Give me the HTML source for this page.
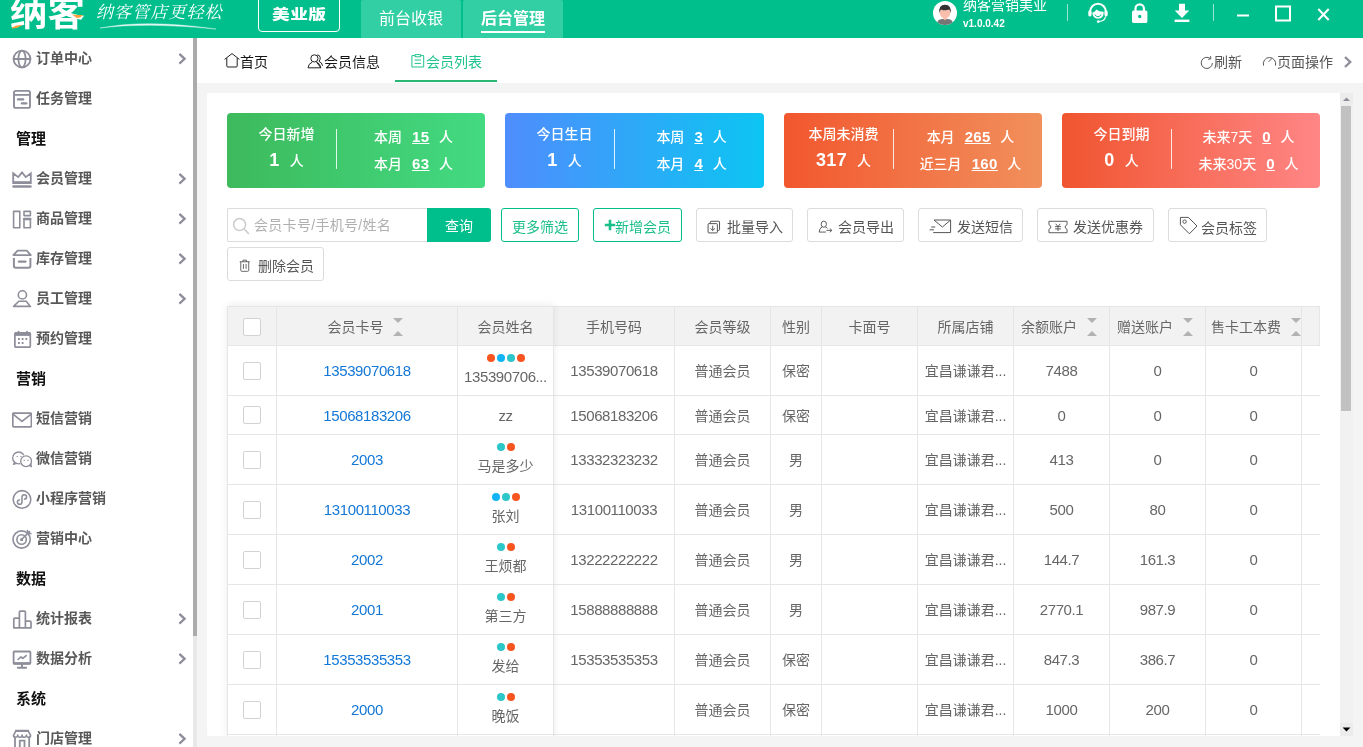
<!DOCTYPE html>
<html lang="zh-CN">
<head>
<meta charset="utf-8">
<title>会员列表</title>
<style>
*{box-sizing:border-box;margin:0;padding:0}
html,body{width:1363px;height:747px;overflow:hidden;background:#f4f4f4;font-family:"Liberation Sans","Noto Sans CJK SC",sans-serif;font-size:14px;color:#333}
.abs{position:absolute}
#hdr,#side,#tabs,#panel{will-change:transform}
#hdr{position:absolute;left:0;top:0;width:1363px;height:38px;background:#00bf8c;overflow:hidden}
#side{position:absolute;left:0;top:38px;width:193px;height:709px;background:#fff;overflow:hidden}
#sthumb{position:absolute;left:193px;top:38px;width:4px;height:598px;background:#ababab}
#strack{position:absolute;left:193px;top:38px;width:4px;height:709px;background:#e8e8e8}
#tabs{position:absolute;left:197px;top:38px;width:1166px;height:45px;background:#fff}
#panel{position:absolute;left:207px;top:93px;width:1133px;height:643px;background:#fff;overflow:hidden;border-radius:2px 0 0 2px}
#vtrack{position:absolute;left:1340px;top:93px;width:13px;height:643px;background:#f1f1f1}
#vthumb{position:absolute;left:1341px;top:106px;width:10px;height:305px;background:#c1c1c1}
/* sidebar */
.mi{position:absolute;left:0;width:193px;height:40px;line-height:40px;font-weight:700;color:#585858;font-size:14px}
.mi span{position:absolute;left:36px;top:0;white-space:nowrap}
.mi svg.ic{position:absolute;left:12px;top:11px;width:20px;height:20px}
.mi svg.ch{position:absolute;left:177px;top:15px;width:10px;height:12px}
.mh{position:absolute;left:16px;height:40px;line-height:42px;font-weight:bold;color:#111;font-size:15px;white-space:nowrap}

/* header */
#logo{position:absolute;left:10px;top:-8px;font-size:35px;line-height:44px;font-weight:700;color:#fff;letter-spacing:0;transform:scaleX(1.07);transform-origin:0 0;white-space:nowrap;font-family:"Liberation Sans","Noto Sans CJK SC",sans-serif}
#slogan{position:absolute;left:96px;top:2px;font-size:17px;line-height:22px;color:#fff;letter-spacing:1.1px;white-space:nowrap;font-style:italic;font-weight:400;font-family:"Liberation Serif","Noto Serif CJK SC",serif}
#ver{position:absolute;left:258px;top:-6px;width:82px;height:38px;border:1px solid #fff;border-radius:4px;color:#fff;font-weight:900;font-size:17px;line-height:40px;text-align:center;letter-spacing:0.5px}
.ht{position:absolute;top:0;height:38px;background:#32cfa5;border-radius:2px 2px 0 0;color:#fff;font-size:16px;line-height:38px;text-align:center}
#uname{position:absolute;left:963px;top:-5px;color:#fff;font-size:14px;line-height:20px;white-space:nowrap}
#uver{position:absolute;left:963px;top:17px;color:#fff;font-weight:bold;font-size:10px;line-height:14px;white-space:nowrap}
.hdiv{position:absolute;top:4px;width:1px;height:17px;background:rgba(255,255,255,.6)}

/* tabs */
.tb{position:absolute;top:1px;height:45px;line-height:46px;font-size:14px;color:#151515;white-space:nowrap}
.tb svg{position:absolute}

/* cards */
.card{position:absolute;top:20px;height:75px;border-radius:4px;color:#fff;font-size:14px;font-weight:500}
.card .dv{position:absolute;left:109px;top:16px;width:1px;height:40px;background:rgba(255,255,255,.85)}
.card .l1,.card .l2,.card .r1,.card .r2{position:absolute;white-space:nowrap;text-align:center}
.card .l1{left:0;width:119px;top:10px;line-height:22px}
.card .l2{left:0;width:119px;top:34px;line-height:26px}
.card .l2 b{font-size:18px;letter-spacing:.4px;margin-right:10px;position:relative;top:0}
.card .r1{left:115px;width:143px;top:13px;line-height:22px}
.card .r2{left:115px;width:143px;top:40px;line-height:22px}
.card u{font-weight:bold;font-size:15px;letter-spacing:.4px;margin:0 9.5px 0 10px}
/* toolbar */
.btn{position:absolute;height:34px;line-height:36px;border:1px solid #dcdcdc;border-radius:3px;background:#fff;color:#555;font-size:14px;white-space:nowrap}
.btn span{position:absolute;top:0;white-space:nowrap}
.btn svg{position:absolute}
.btn.g{border-color:#00bf8c;color:#1bbf8a}

/* table */
#tbl{position:absolute;left:20px;top:213px;width:1093px;height:430px;color:#666;font-size:14px}
#tbl .hb{position:absolute;left:0;top:0;width:1093px;height:40px;background:#f2f2f2;border:1px solid #e6e6e6}
#tbl .vl{position:absolute;top:0;width:1px;height:430px;background:#e6e6e6}
#tbl .hl{position:absolute;left:0;width:1093px;height:1px;background:#e6e6e6}
#tbl .c{position:absolute;height:20px;line-height:20px;text-align:center;white-space:nowrap}
#tbl .c.n{font-size:15px;letter-spacing:-.4px}
#tbl .th{position:absolute;top:11px;height:20px;line-height:20px;white-space:nowrap;text-align:center}
#tbl .cb{position:absolute;left:16px;width:18px;height:18px;border:1px solid #d2d2d2;border-radius:2px;background:#fff}
#tbl a{color:#1377d6;text-decoration:none}
#tbl .st{position:absolute;width:10px;height:20px;top:11px}
#tbl .st:before,#tbl .st:after{content:"";position:absolute;left:0;border:5px solid transparent}
#tbl .st:before{top:1px;border-top-color:#b2b2b2;border-bottom-width:0}
#tbl .st:after{top:14px;border-bottom-color:#b2b2b2;border-top-width:0}
#tbl .d{position:absolute;width:8px;height:8px;border-radius:50%}
</style>
</head>
<body>
<div id="hdr">
<div id="logo">纳客</div>
<svg class="abs" style="left:0;top:0" width="100" height="38" viewBox="0 0 100 38"><path d="M12 27.5 Q16 24.5 22 25 Q18 28.5 12 28.5Z" fill="#f7a13a"/><path d="M72 14.5 Q77 15 83 15 Q80 19 76 17.5Z" fill="#f7a13a"/></svg>
<div id="slogan">纳客管店更轻松</div>
<svg class="abs" style="left:96px;top:20px" width="130" height="12" viewBox="0 0 130 12"><path d="M4 8 Q50 -1 120 9 Q50 2 4 8Z" fill="#fff" fill-opacity=".85" stroke="#fff" stroke-opacity=".6" stroke-width=".6"/></svg>
<div id="ver"><span style="display:inline-block;transform:scale(1.04,.8);transform-origin:50% 50%">美业版</span></div>
<div class="ht" style="left:361px;width:100px">前台收银</div>
<div class="ht" style="left:463px;width:100px;font-weight:bold">后台管理<i class="abs" style="left:18px;top:31px;width:64px;height:2px;background:#fff"></i></div>
<svg class="abs" style="left:933px;top:1px" width="24" height="24" viewBox="0 0 24 24"><defs><clipPath id="avc"><circle cx="12" cy="12" r="12"/></clipPath></defs><circle cx="12" cy="12" r="12" fill="#fff"/><g clip-path="url(#avc)"><path d="M3.4 26 Q3.4 18.2 9 18 H15 Q20.6 18.2 20.6 26Z" fill="#757575"/><path d="M10.4 15 H13.6 V18 L12 19.6 L10.4 18Z" fill="#f5b5a0"/><ellipse cx="12" cy="11.6" rx="5.3" ry="6" fill="#f9bfac"/><path d="M6.4 12.2 Q5.2 4 12 3.8 Q18.8 4 17.6 12.2 Q17.2 9.4 16.2 8.6 Q12 10 8 8.4 Q6.8 9.4 6.4 12.2Z" fill="#333"/></g></svg>
<div id="uname">纳客营销美业</div>
<div id="uver">v1.0.0.42</div>
<div class="hdiv" style="left:1067px"></div>
<svg class="abs" style="left:1086px;top:1px" width="24" height="24" viewBox="0 0 24 24" fill="none" stroke="#fff"><path d="M4.2 13 V10.5 A7.8 7.8 0 0 1 19.8 10.5 V13" stroke-width="2"/><rect x="2.3" y="9.5" width="3.2" height="6" rx="1.4" fill="#fff" stroke="none"/><rect x="18.5" y="9.5" width="3.2" height="6" rx="1.4" fill="#fff" stroke="none"/><path d="M6.3 11.5 Q9 11 10.5 8.5 Q13 11 17.7 10.8 Q18 17.5 12 17.8 Q6.5 17.5 6.3 11.5Z" fill="#fff" stroke="none"/><path d="M8.7 13.6 Q10.5 15.8 12 15.8 Q13.5 15.8 15.3 13.6" stroke="#00bf8c" stroke-width="1"/><path d="M19.5 15.5 Q19 20 13 20.5" stroke-width="1.2"/><circle cx="12.3" cy="20.6" r="1.4" fill="#fff" stroke="none"/></svg>
<svg class="abs" style="left:1130px;top:2px" width="20" height="22" viewBox="0 0 20 22"><path d="M5.5 9 V6.5 A4.2 4.2 0 0 1 13.9 6.5 V9" fill="none" stroke="#fff" stroke-width="2.2"/><rect x="2" y="8.5" width="15.4" height="12.4" rx="1.6" fill="#fff"/><circle cx="9.7" cy="14.5" r="1.7" fill="#00bf8c"/></svg>
<svg class="abs" style="left:1172px;top:2px" width="20" height="22" viewBox="0 0 20 22" fill="#fff"><path d="M7 1.8 H13 V8.5 H17.3 L10 16 L2.7 8.5 H7Z"/><rect x="2.6" y="17.6" width="14.8" height="2.4"/></svg>
<div class="hdiv" style="left:1213px"></div>
<svg class="abs" style="left:1230px;top:0" width="110" height="30" viewBox="0 0 110 30" stroke="#fff" stroke-width="2" fill="none"><path d="M7 15.5 H19"/><rect x="46" y="6.5" width="14" height="14"/><path d="M88.3 9 L98.7 20 M98.7 9 L88.3 20"/></svg>
</div>
<div id="side">
<div class="mi" style="top:0px"><svg class="ic" viewBox="0 0 20 20" fill="none" stroke="#8e8e9b" stroke-width="1.8" stroke-linecap="round" stroke-linejoin="round"><circle cx="10" cy="10" r="8.4"/><ellipse cx="10" cy="10" rx="3.6" ry="8.4"/><path d="M1.6 10 H18.4"/></svg><span>订单中心</span><svg class="ch" viewBox="0 0 10 12" fill="none" stroke="#8e8e9b" stroke-width="2.3" stroke-linecap="butt" stroke-linejoin="miter"><path d="M2.4 0.9 L7.6 5.8 L2.4 10.7"/></svg></div>
<div class="mi" style="top:40px"><svg class="ic" viewBox="0 0 20 20" fill="none" stroke="#8e8e9b" stroke-width="1.8" stroke-linecap="round" stroke-linejoin="round"><rect x="2" y="1.9" width="16" height="17" rx="1.6" stroke-width="1.9"/><path d="M2 5.9 H18" stroke-width="1.8" stroke-linecap="butt"/><path d="M6 10.4 H11.2 M9.8 14.4 H14.4" stroke-width="2.2" stroke-linecap="round"/></svg><span>任务管理</span></div>
<div class="mh" style="top:80px">管理</div>
<div class="mi" style="top:120px"><svg class="ic" viewBox="0 0 20 20" fill="none" stroke="#8e8e9b" stroke-width="1.8" stroke-linecap="round" stroke-linejoin="round"><g transform="translate(0,0.5)"><path d="M1.2 3.8 L6.2 7.6 L10 2.9 L13.8 7.6 L18.8 3.8 V13.6 H1.2Z" stroke-linejoin="miter"/><path d="M1.2 13 H18.8" stroke-width="2.65" stroke-linecap="butt"/><path d="M1.6 17 H18.4" stroke-width="2.65"/></g></svg><span>会员管理</span><svg class="ch" viewBox="0 0 10 12" fill="none" stroke="#8e8e9b" stroke-width="2.3" stroke-linecap="butt" stroke-linejoin="miter"><path d="M2.4 0.9 L7.6 5.8 L2.4 10.7"/></svg></div>
<div class="mi" style="top:160px"><svg class="ic" viewBox="0 0 20 20" fill="none" stroke="#8e8e9b" stroke-width="1.6" stroke-linecap="round" stroke-linejoin="round"><g transform="translate(0,0.6)"><rect x="1.6" y="1.8" width="6.2" height="16.4"/><rect x="12" y="1.8" width="6.4" height="4.2"/><rect x="12" y="9" width="6.4" height="9.2"/><path d="M12 9.4 H18.4" stroke-width="2.25"/></g></svg><span>商品管理</span><svg class="ch" viewBox="0 0 10 12" fill="none" stroke="#8e8e9b" stroke-width="2.3" stroke-linecap="butt" stroke-linejoin="miter"><path d="M2.4 0.9 L7.6 5.8 L2.4 10.7"/></svg></div>
<div class="mi" style="top:200px"><svg class="ic" viewBox="0 0 20 20" fill="none" stroke="#8e8e9b" stroke-width="1.8" stroke-linecap="round" stroke-linejoin="round"><path d="M5.6 1.7 H14.8 L18.8 6.1 H1.4 Z" stroke-width="1.8" stroke-linejoin="round"/><path d="M1.9 9 V17 Q1.9 18.8 3.7 18.8 H16.6 Q18.4 18.8 18.4 17 V9" stroke-width="2" stroke-linecap="butt"/><path d="M7 12.6 H13.4" stroke-width="2.4"/></svg><span>库存管理</span><svg class="ch" viewBox="0 0 10 12" fill="none" stroke="#8e8e9b" stroke-width="2.3" stroke-linecap="butt" stroke-linejoin="miter"><path d="M2.4 0.9 L7.6 5.8 L2.4 10.7"/></svg></div>
<div class="mi" style="top:240px"><svg class="ic" viewBox="0 0 20 20" fill="none" stroke="#8e8e9b" stroke-width="1.7" stroke-linecap="round" stroke-linejoin="round"><circle cx="10.4" cy="5.9" r="4.1" stroke-width="1.6"/><path d="M6.8 12.3 H14.2 L18.4 17.4 H1.6 Z" stroke-width="1.6" stroke-linejoin="round"/></svg><span>员工管理</span><svg class="ch" viewBox="0 0 10 12" fill="none" stroke="#8e8e9b" stroke-width="2.3" stroke-linecap="butt" stroke-linejoin="miter"><path d="M2.4 0.9 L7.6 5.8 L2.4 10.7"/></svg></div>
<div class="mi" style="top:280px"><svg class="ic" viewBox="0 0 20 20" fill="none" stroke="#8e8e9b" stroke-width="1.8" stroke-linecap="round" stroke-linejoin="round"><rect x="2.9" y="3.8" width="15.4" height="14.4" rx="1" stroke-width="1.7"/><path d="M2.9 5 H18.3" stroke-width="3.8" stroke-linecap="butt"/><path d="M6.6 2.6 V3 M15 2.6 V3" stroke-width="1.8"/><path d="M6 10 H7.8 M9.7 10 H11.5 M13.4 10 H15.2 M6 14 H7.8 M9.7 14 H11.5" stroke-width="1.8" stroke-linecap="butt"/></svg><span>预约管理</span></div>
<div class="mh" style="top:320px">营销</div>
<div class="mi" style="top:360px"><svg class="ic" viewBox="0 0 20 20" fill="none" stroke="#8e8e9b" stroke-width="1.7" stroke-linecap="round" stroke-linejoin="round"><g transform="translate(0,0.8)"><rect x="0.8" y="3.4" width="18.6" height="13.6" rx="1"/><path d="M1 4.4 L10 11.6 L19.2 4.4"/></g></svg><span>短信营销</span></div>
<div class="mi" style="top:400px"><svg class="ic" viewBox="0 0 20 20" fill="none" stroke="#8e8e9b" stroke-width="1.8" stroke-linecap="round" stroke-linejoin="round"><circle cx="6.6" cy="8.9" r="5.9" stroke-width="1.35"/><path d="M2.6 13.2 L1.5 15.4 L4.4 14.4" stroke-width="1.35" fill="#fff"/><circle cx="14.1" cy="12.2" r="5.4" fill="#fff" stroke="#fff" stroke-width="2"/><circle cx="14.1" cy="12.2" r="5.4" fill="#fff" stroke-width="1.35"/><path d="M17.6 16.4 L19.4 17.6 L18.8 15" stroke-width="1.35" fill="#fff"/><path d="M4.6 7.5 H5.8 M8.4 7.5 H9.6 M11.6 11.4 H12.8 M15.4 11.4 H16.6" stroke-width="1.2" stroke-linecap="butt"/></svg><span>微信营销</span></div>
<div class="mi" style="top:440px"><svg class="ic" viewBox="0 0 20 20" fill="none" stroke="#8e8e9b" stroke-width="1.8" stroke-linecap="round" stroke-linejoin="round"><g transform="translate(0,0.8)"><circle cx="10" cy="9.6" r="8.8" stroke-width="1.55"/><path d="M10 12.4 V7.2 A2.3 2.3 0 0 1 14.6 7.2 A2.1 2.1 0 0 1 12.6 9.3 M10 7.2 V12.2 A2.3 2.3 0 0 1 5.4 12.2 A2.1 2.1 0 0 1 7.4 10.1" stroke-width="1.55"/></g></svg><span>小程序营销</span></div>
<div class="mi" style="top:480px"><svg class="ic" viewBox="0 0 20 20" fill="none" stroke="#8e8e9b" stroke-width="1.8" stroke-linecap="round" stroke-linejoin="round"><circle cx="9.6" cy="10.5" r="8.6" stroke-width="1.6"/><circle cx="9.6" cy="10.5" r="4.7" stroke-width="1.6"/><rect x="8.2" y="9.2" width="2.8" height="2.8" rx=".6" fill="#8e8e9b" stroke="none"/><path d="M10 10 L17.6 2.6 M15.4 1.6 L16 4.2 L18.8 4.6" stroke-width="1.6"/></svg><span>营销中心</span></div>
<div class="mh" style="top:520px">数据</div>
<div class="mi" style="top:560px"><svg class="ic" viewBox="0 0 20 20" fill="none" stroke="#8e8e9b" stroke-width="1.8" stroke-linecap="round" stroke-linejoin="round"><g transform="translate(0.4,0.8)"><path d="M1.4 18 V9.4 Q1.4 8.4 2.4 8.4 H7 M7 18 V2.4 Q7 1.4 8 1.4 H12 Q13 1.4 13 2.4 V18 M13 11.4 H17.6 Q18.6 11.4 18.6 12.4 V18 M1.4 18 H18.6" stroke-width="1.7" stroke-linejoin="round"/></g></svg><span>统计报表</span><svg class="ch" viewBox="0 0 10 12" fill="none" stroke="#8e8e9b" stroke-width="2.3" stroke-linecap="butt" stroke-linejoin="miter"><path d="M2.4 0.9 L7.6 5.8 L2.4 10.7"/></svg></div>
<div class="mi" style="top:600px"><svg class="ic" viewBox="0 0 20 20" fill="none" stroke="#8e8e9b" stroke-width="1.8" stroke-linecap="round" stroke-linejoin="round"><g transform="translate(0,0.5)"><rect x="1.6" y="2" width="16.8" height="12.4" rx=".8" stroke-width="1.8"/><path d="M1.6 13.8 H18.4" stroke-width="2.4" stroke-linecap="butt"/><path d="M10 14.6 V18 M5.8 18.2 H14.2" stroke-width="1.9"/><path d="M6 10 L9 7.4 L10.6 9 L14.2 6.2" stroke-width="1.6"/></g></svg><span>数据分析</span><svg class="ch" viewBox="0 0 10 12" fill="none" stroke="#8e8e9b" stroke-width="2.3" stroke-linecap="butt" stroke-linejoin="miter"><path d="M2.4 0.9 L7.6 5.8 L2.4 10.7"/></svg></div>
<div class="mh" style="top:640px">系统</div>
<div class="mi" style="top:680px"><svg class="ic" viewBox="0 0 20 20" fill="none" stroke="#8e8e9b" stroke-width="1.8" stroke-linecap="round" stroke-linejoin="round"><path d="M4 1.8 H16.1 L18.6 6.4 Q18.5 8.3 16.5 8.3 Q14.5 8.3 14.4 6 Q14.3 8.3 12.2 8.3 Q10.1 8.3 10.05 6 Q10 8.3 7.9 8.3 Q5.8 8.3 5.7 6 Q5.6 8.3 3.6 8.3 Q1.6 8.3 1.5 6.4 Z" stroke-width="1.6"/><path d="M4 1.8 H16.1" stroke-width="2.2"/><path d="M3 8.6 V19.4 M17.2 8.6 V19.4 M7.8 19.4 V11.7 H12.5 V19.4" stroke-width="1.8" stroke-linejoin="miter"/></svg><span>门店管理</span><svg class="ch" viewBox="0 0 10 12" fill="none" stroke="#8e8e9b" stroke-width="2.3" stroke-linecap="butt" stroke-linejoin="miter"><path d="M2.4 0.9 L7.6 5.8 L2.4 10.7"/></svg></div>
</div>
<div id="strack"></div><div id="sthumb"></div>
<div id="tabs">
<div class="tb" style="left:43px">首页<svg style="left:-16.5px;top:14px" width="16" height="16" viewBox="0 0 16 16" fill="none" stroke="#222" stroke-width="1"><path d="M0.6 6.4 L8 0.6 L15.4 6.4 M2.8 5 V13 Q2.8 14 3.8 14 H12.2 Q13.2 14 13.2 13 V5"/></svg></div>
<div class="tb" style="left:127px">会员信息<svg style="left:-17px;top:14px" width="17" height="17" viewBox="0 0 17 17" fill="none" stroke="#222" stroke-width="1"><path d="M10.2 2 Q12.6 1.6 13.2 4.4 Q13.4 7 12 8.4 Q15 9.4 15.6 12.8"/><circle cx="7.4" cy="5.4" r="3.6"/><path d="M1 14.8 Q1.4 10.6 5.2 9.2 M9.6 9.2 Q13.4 10.6 13.8 14.8 Z M1 14.8 H13.8"/></svg></div>
<div class="tb" style="left:229px;color:#1fc38d">会员列表<svg style="left:-15px;top:15px" width="14" height="14" viewBox="0 0 14 14" fill="none" stroke="#1fc38d" stroke-width="1"><path d="M4 1.6 H0.9 V13 H12.7 V1.6 H9.6 M4 0.6 H9.6 V2.8 H4Z M3.6 6 H10 M3.6 9.4 H10"/></svg></div>
<i class="abs" style="left:198px;top:42px;width:102px;height:2px;background:#2ab673"></i>
<div class="tb" style="left:1017px;color:#555">刷新<svg style="left:-14px;top:17px" width="14" height="14" viewBox="0 0 14 14" fill="none" stroke="#555" stroke-width="1"><path d="M10.4 2.6 A5.6 5.6 0 1 0 12.4 7"/><path d="M8.2 3.4 L10.8 2.8 L10.6 0.2" /></svg></div>
<div class="tb" style="left:1080px;color:#555">页面操作<svg style="left:-15px;top:16px" width="15" height="12" viewBox="0 0 15 12" fill="none" stroke="#555" stroke-width="1"><path d="M1.6 10.6 A6.2 6.2 0 1 1 13.4 10.6"/><path d="M6.6 6.8 L10 3.4"/></svg></div>
<svg class="abs" style="left:1146px;top:17.5px" width="10" height="12" viewBox="0 0 10 12" fill="none" stroke="#8e8e9b" stroke-width="2.4"><path d="M2 1 L7.2 6 L2 11"/></svg>
</div>
<div id="panel">
<div class="card" style="left:20px;width:258px;background:linear-gradient(90deg,#3dba5c,#43da82)"><div class="l1">今日新增</div><div class="l2"><b>1</b>人</div><i class="dv"></i><div class="r1">本周<u>15</u>人</div><div class="r2">本月<u>63</u>人</div></div>
<div class="card" style="left:298px;width:259px;background:linear-gradient(90deg,#4f8dfd,#0cc5f2)"><div class="l1">今日生日</div><div class="l2"><b>1</b>人</div><i class="dv"></i><div class="r1">本周<u>3</u>人</div><div class="r2">本月<u>4</u>人</div></div>
<div class="card" style="left:577px;width:258px;background:linear-gradient(90deg,#f2572f,#f1905c)"><div class="l1">本周未消费</div><div class="l2"><b>317</b>人</div><i class="dv"></i><div class="r1">本月<u>265</u>人</div><div class="r2">近三月<u>160</u>人</div></div>
<div class="card" style="left:855px;width:258px;background:linear-gradient(90deg,#f0552f,#ff8686)"><div class="l1">今日到期</div><div class="l2"><b>0</b>人</div><i class="dv"></i><div class="r1">未来7天<u>0</u>人</div><div class="r2">未来30天<u>0</u>人</div></div>
<div class="abs" style="left:20px;top:115px;width:200px;height:34px;border:1px solid #dcdcdc;border-right:0;border-radius:2px 0 0 2px;background:#fff"><svg class="abs" style="left:4px;top:8px" width="18" height="18" viewBox="0 0 18 18" fill="none" stroke="#ccc" stroke-width="1.5"><circle cx="7.6" cy="7.6" r="6"/><path d="M12 12 L16.4 16.4" stroke-linecap="round"/></svg><span class="abs" style="left:26px;top:0;line-height:32px;color:#b0b0b0;letter-spacing:.3px;white-space:nowrap">会员卡号/手机号/姓名</span></div>
<div class="abs" style="left:220px;top:115px;width:64px;height:34px;background:#00bf8c;border-radius:0 3px 3px 0;color:#fff;text-align:center;line-height:36px">查询</div>
<div class="btn g" style="left:294px;top:115px;width:78px"><span style="left:10px">更多筛选</span></div>
<div class="btn g" style="left:386px;top:115px;width:89px"><svg style="left:10px;top:10px" width="12" height="12" viewBox="0 0 12 12"><path d="M6 0.8 V11.2 M0.8 6 H11.2" stroke="#1bbf8a" stroke-width="2.6"/></svg><span style="left:21px">新增会员</span></div>
<div class="btn" style="left:489px;top:115px;width:97px"><svg style="left:10px;top:11px" width="14" height="14" viewBox="0 0 15.4 15.4" fill="none" stroke="#555" stroke-width="1.1"><path d="M3.6 4 V2.2 Q3.6 1.4 4.4 1.4 H13 Q13.8 1.4 13.8 2.2 V10.6 Q13.8 11.4 13 11.4 H11.4"/><rect x="1.2" y="4" width="10.2" height="10.2" rx=".8"/><path d="M6.3 6.2 V11.4 M3.9 9.2 L6.3 11.6 L8.7 9.2"/></svg><span style="left:30px">批量导入</span></div>
<div class="btn" style="left:600px;top:115px;width:97px"><svg style="left:10px;top:11px" width="15" height="14" viewBox="0 0 16 14" fill="none" stroke="#555" stroke-width="1"><ellipse cx="6.2" cy="4" rx="2.8" ry="3.3"/><path d="M4.6 6.8 Q1.4 8 1.2 12.4 H8.4 M7.8 6.8 Q9.4 7.4 10.2 8.6 M9 10.6 H14.6 M12.6 8.6 L14.8 10.6 L12.6 12.6"/></svg><span style="left:30px">会员导出</span></div>
<div class="btn" style="left:711px;top:115px;width:105px"><svg style="left:10px;top:10px" width="23" height="15" viewBox="0 0 23 15" fill="none" stroke="#555" stroke-width="1"><path d="M5 1 H21.6 V13.6 H4.2 M5.2 1.2 L13.4 8 L21.4 1.2 M2.2 8 H6.2 M0.6 10.8 H5"/></svg><span style="left:38px">发送短信</span></div>
<div class="btn" style="left:830px;top:115px;width:117px"><svg style="left:10px;top:10.5px" width="20" height="14" viewBox="0 0 21 14" fill="none" stroke="#555" stroke-width="1"><path d="M1 1 H20 V4.6 Q18 5.4 18 7 Q18 8.6 20 9.4 V13 H1 V9.4 Q3 8.6 3 7 Q3 5.4 1 4.6Z"/><path d="M8 3.6 L10.5 6.4 L13 3.6 M7.4 6.6 H13.6 M7.4 9 H13.6 M10.5 6.4 V11.2"/></svg><span style="left:35px">发送优惠券</span></div>
<div class="btn" style="left:961px;top:115px;width:99px"><svg style="left:9px;top:6px" width="21" height="21" viewBox="0 0 21 21" fill="none" stroke="#555" stroke-width="1"><path d="M2.4 2.4 H10.4 L19 11 L11.4 18.8 L2.4 9.8Z" stroke-linejoin="round"/><circle cx="6.6" cy="6.6" r="1.7"/></svg><span style="left:32px;top:1px">会员标签</span></div>
<div class="btn" style="left:20px;top:154px;width:97px"><svg style="left:11px;top:11px" width="11.5" height="13.5" viewBox="0 0 13 15" fill="none" stroke="#555" stroke-width="1"><path d="M0.8 3 H12.2 M4.4 3 V1.2 H8.6 V3 M2 3 V12.6 Q2 13.8 3.2 13.8 H9.8 Q11 13.8 11 12.6 V3 M5 5.6 V11 M8 5.6 V11"/></svg><span style="left:30px">删除会员</span></div>
<div id="tbl">
<div class="hb"></div>
<i class="hl" style="top:89px"></i>
<i class="hl" style="top:128px"></i>
<i class="hl" style="top:178px"></i>
<i class="hl" style="top:228px"></i>
<i class="hl" style="top:278px"></i>
<i class="hl" style="top:328px"></i>
<i class="hl" style="top:378px"></i>
<i class="hl" style="top:428px"></i>
<i class="vl" style="left:0px"></i>
<i class="vl" style="left:49px"></i>
<i class="vl" style="left:230px"></i>
<i class="vl" style="left:326px"></i>
<i class="vl" style="left:447px"></i>
<i class="vl" style="left:543px"></i>
<i class="vl" style="left:594px"></i>
<i class="vl" style="left:690px"></i>
<i class="vl" style="left:786px"></i>
<i class="vl" style="left:882px"></i>
<i class="vl" style="left:978px"></i>
<i class="vl" style="left:1074px"></i>
<i class="abs" style="left:0;top:0;width:327px;height:440px;box-shadow:0 -1px 8px rgba(0,0,0,.08)"></i>
<i class="cb" style="top:12px"></i>
<div class="th" style="left:100.5px">会员卡号</div><i class="st" style="left:166px"></i>
<div class="th" style="left:231px;width:95px">会员姓名</div>
<div class="th" style="left:327px;width:120px">手机号码</div>
<div class="th" style="left:448px;width:95px">会员等级</div>
<div class="th" style="left:544px;width:50px">性别</div>
<div class="th" style="left:595px;width:95px">卡面号</div>
<div class="th" style="left:691px;width:95px">所属店铺</div>
<div class="th" style="left:794px">余额账户</div><i class="st" style="left:860px"></i>
<div class="th" style="left:890px">赠送账户</div><i class="st" style="left:956px"></i>
<div class="th" style="left:984px">售卡工本费</div><i class="st" style="left:1063.5px"></i>
<i class="cb" style="top:56px"></i>
<div class="c n" style="left:50px;width:180px;top:55px"><a>13539070618</a></div>
<i class="d" style="left:260px;top:48px;background:#f8541f"></i>
<i class="d" style="left:270px;top:48px;background:#12b4f5"></i>
<i class="d" style="left:280px;top:48px;background:#2ec7c9"></i>
<i class="d" style="left:290px;top:48px;background:#f8541f"></i>
<div class="c n" style="left:231px;width:95px;top:61px">135390706...</div>
<div class="c n" style="left:327px;width:120px;top:55px">13539070618</div>
<div class="c" style="left:448px;width:95px;top:55px">普通会员</div>
<div class="c" style="left:544px;width:50px;top:55px">保密</div>
<div class="c" style="left:691px;width:95px;top:55px">宜昌谦谦君...</div>
<div class="c n" style="left:787px;width:95px;top:55px">7488</div>
<div class="c n" style="left:883px;width:95px;top:55px">0</div>
<div class="c n" style="left:979px;width:95px;top:55px">0</div>
<i class="cb" style="top:100px"></i>
<div class="c n" style="left:50px;width:180px;top:100px"><a>15068183206</a></div>
<div class="c n" style="left:231px;width:95px;top:100px">zz</div>
<div class="c n" style="left:327px;width:120px;top:100px">15068183206</div>
<div class="c" style="left:448px;width:95px;top:100px">普通会员</div>
<div class="c" style="left:544px;width:50px;top:100px">保密</div>
<div class="c" style="left:691px;width:95px;top:100px">宜昌谦谦君...</div>
<div class="c n" style="left:787px;width:95px;top:100px">0</div>
<div class="c n" style="left:883px;width:95px;top:100px">0</div>
<div class="c n" style="left:979px;width:95px;top:100px">0</div>
<i class="cb" style="top:145px"></i>
<div class="c n" style="left:50px;width:180px;top:144px"><a>2003</a></div>
<i class="d" style="left:270px;top:137px;background:#2ec7c9"></i>
<i class="d" style="left:280px;top:137px;background:#f8541f"></i>
<div class="c" style="left:231px;width:95px;top:150px">马是多少</div>
<div class="c n" style="left:327px;width:120px;top:144px">13332323232</div>
<div class="c" style="left:448px;width:95px;top:144px">普通会员</div>
<div class="c" style="left:544px;width:50px;top:144px">男</div>
<div class="c" style="left:691px;width:95px;top:144px">宜昌谦谦君...</div>
<div class="c n" style="left:787px;width:95px;top:144px">413</div>
<div class="c n" style="left:883px;width:95px;top:144px">0</div>
<div class="c n" style="left:979px;width:95px;top:144px">0</div>
<i class="cb" style="top:195px"></i>
<div class="c n" style="left:50px;width:180px;top:194px"><a>13100110033</a></div>
<i class="d" style="left:265px;top:187px;background:#12b4f5"></i>
<i class="d" style="left:275px;top:187px;background:#2ec7c9"></i>
<i class="d" style="left:285px;top:187px;background:#f8541f"></i>
<div class="c" style="left:231px;width:95px;top:200px">张刘</div>
<div class="c n" style="left:327px;width:120px;top:194px">13100110033</div>
<div class="c" style="left:448px;width:95px;top:194px">普通会员</div>
<div class="c" style="left:544px;width:50px;top:194px">男</div>
<div class="c" style="left:691px;width:95px;top:194px">宜昌谦谦君...</div>
<div class="c n" style="left:787px;width:95px;top:194px">500</div>
<div class="c n" style="left:883px;width:95px;top:194px">80</div>
<div class="c n" style="left:979px;width:95px;top:194px">0</div>
<i class="cb" style="top:245px"></i>
<div class="c n" style="left:50px;width:180px;top:244px"><a>2002</a></div>
<i class="d" style="left:270px;top:237px;background:#2ec7c9"></i>
<i class="d" style="left:280px;top:237px;background:#f8541f"></i>
<div class="c" style="left:231px;width:95px;top:250px">王烦都</div>
<div class="c n" style="left:327px;width:120px;top:244px">13222222222</div>
<div class="c" style="left:448px;width:95px;top:244px">普通会员</div>
<div class="c" style="left:544px;width:50px;top:244px">男</div>
<div class="c" style="left:691px;width:95px;top:244px">宜昌谦谦君...</div>
<div class="c n" style="left:787px;width:95px;top:244px">144.7</div>
<div class="c n" style="left:883px;width:95px;top:244px">161.3</div>
<div class="c n" style="left:979px;width:95px;top:244px">0</div>
<i class="cb" style="top:295px"></i>
<div class="c n" style="left:50px;width:180px;top:294px"><a>2001</a></div>
<i class="d" style="left:270px;top:287px;background:#2ec7c9"></i>
<i class="d" style="left:280px;top:287px;background:#f8541f"></i>
<div class="c" style="left:231px;width:95px;top:300px">第三方</div>
<div class="c n" style="left:327px;width:120px;top:294px">15888888888</div>
<div class="c" style="left:448px;width:95px;top:294px">普通会员</div>
<div class="c" style="left:544px;width:50px;top:294px">男</div>
<div class="c" style="left:691px;width:95px;top:294px">宜昌谦谦君...</div>
<div class="c n" style="left:787px;width:95px;top:294px">2770.1</div>
<div class="c n" style="left:883px;width:95px;top:294px">987.9</div>
<div class="c n" style="left:979px;width:95px;top:294px">0</div>
<i class="cb" style="top:345px"></i>
<div class="c n" style="left:50px;width:180px;top:344px"><a>15353535353</a></div>
<i class="d" style="left:270px;top:337px;background:#2ec7c9"></i>
<i class="d" style="left:280px;top:337px;background:#f8541f"></i>
<div class="c" style="left:231px;width:95px;top:350px">发给</div>
<div class="c n" style="left:327px;width:120px;top:344px">15353535353</div>
<div class="c" style="left:448px;width:95px;top:344px">普通会员</div>
<div class="c" style="left:544px;width:50px;top:344px">保密</div>
<div class="c" style="left:691px;width:95px;top:344px">宜昌谦谦君...</div>
<div class="c n" style="left:787px;width:95px;top:344px">847.3</div>
<div class="c n" style="left:883px;width:95px;top:344px">386.7</div>
<div class="c n" style="left:979px;width:95px;top:344px">0</div>
<i class="cb" style="top:395px"></i>
<div class="c n" style="left:50px;width:180px;top:394px"><a>2000</a></div>
<i class="d" style="left:270px;top:387px;background:#2ec7c9"></i>
<i class="d" style="left:280px;top:387px;background:#f8541f"></i>
<div class="c" style="left:231px;width:95px;top:400px">晚饭</div>
<div class="c" style="left:448px;width:95px;top:394px">普通会员</div>
<div class="c" style="left:544px;width:50px;top:394px">保密</div>
<div class="c" style="left:691px;width:95px;top:394px">宜昌谦谦君...</div>
<div class="c n" style="left:787px;width:95px;top:394px">1000</div>
<div class="c n" style="left:883px;width:95px;top:394px">200</div>
<div class="c n" style="left:979px;width:95px;top:394px">0</div>
</div>
</div>
<div id="vtrack"><i class="abs" style="left:0;top:0;width:13px;height:13px;background:#ececec"></i><i class="abs" style="left:0;bottom:0;width:13px;height:13px;background:#ececec"></i><svg class="abs" style="left:0;top:0" width="13" height="13" viewBox="0 0 13 13"><path d="M3 8 L6.5 4.4 L10 8Z" fill="#8e8e9b"/></svg><svg class="abs" style="left:0;bottom:0" width="13" height="13" viewBox="0 0 13 13"><path d="M2.6 4.4 L6.5 8.4 L10.4 4.4Z" fill="#000"/></svg></div><div id="vthumb"></div>
</body>
</html>
